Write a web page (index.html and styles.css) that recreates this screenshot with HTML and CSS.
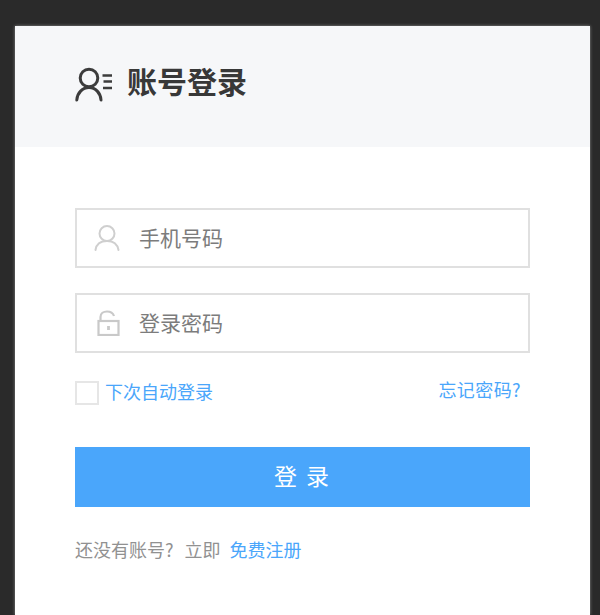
FILE: index.html
```html
<!DOCTYPE html>
<html lang="zh-CN">
<head>
    <meta charset="UTF-8">
    <meta name="viewport" content="width=device-width, initial-scale=1.0">
    <title>账号登录</title>
    <link rel="stylesheet" href="styles.css">
</head>
<body>

    <div class="card">
        <div class="card-head">
            <svg class="head-icon" width="38" height="36" viewBox="0 0 38 36" fill="none" stroke="#3c3c3c" stroke-width="3" stroke-linecap="round">
                <circle cx="14" cy="11" r="8.800"/>
                <path d="M1.800 33c.4-7 5.700-12.500 12.200-12.500S25.600 26 26 33"/>
                <path d="M27.500 8.500H37M28.500 14.500H37M28 21H37" stroke-linecap="butt" stroke-width="2.300"/>
            </svg>
            <h2>账号登录</h2>
        </div>

        <form class="login-form">
            <div class="field">
                <svg class="field-icon" width="26" height="26" viewBox="0 0 26 26" fill="none" stroke="#cfcfcf" stroke-width="2" stroke-linecap="round">
                    <circle cx="13" cy="8.500" r="7.500"/>
                    <path d="M1.500 25c.8-5.500 5-9 11.500-9s10.500 3.500 11.500 9"/>
                </svg>
                <input type="text" placeholder="手机号码">
            </div>

            <div class="field">
                <svg class="field-icon" width="26" height="26" viewBox="0 0 26 26" fill="none" stroke="#c9c9c9" stroke-width="2.200">
                    <rect x="4.500" y="11" width="20" height="14"/>
                    <path d="M6.500 11V7C6.500 3.500 9.500 1.500 13 1.500s6 1.500 7 4.500"/>
                    <path d="M14.500 16v4" stroke-width="2.800"/>
                </svg>
                <input type="text" placeholder="登录密码">
            </div>

            <div class="options">
                <label class="remember"><span class="check"></span><span class="remember-text">下次自动登录</span></label>
                <a class="forgot" href="#">忘记密码?</a>
            </div>

            <button type="button" class="submit">登 录</button>

            <p class="signup">还没有账号? 立即<a href="#">免费注册</a></p>
        </form>
    </div>

</body>
</html>
```

FILE: styles.css
```css
html, body {
    height: 100%;
}

body {
    box-sizing: border-box;
    margin: 0;
    padding: 26px 10px 0 15px;
    overflow: hidden;
    font-family: "Noto Sans CJK SC", "Liberation Sans", sans-serif;
    background-color: #2a2a2a;
}

.card {
    height: 100%;
    background-color: white;
    box-shadow: 0 0 3px rgba(255, 255, 255, 0.45);
}

.card-head {
    display: flex;
    align-items: center;
    height: 121px;
    padding-left: 60px;
    padding-bottom: 8px;
    box-sizing: border-box;
    background-color: #f6f7f9;
}

.head-icon {
    margin-right: 14px;
    margin-top: 5px;
}

h2 {
    margin: 0 0 6px;
    font-size: 30px;
    line-height: 40px;
    font-weight: 700;
    color: #383838;
}

.login-form {
    padding: 61px 60px 0;
}

.field {
    display: flex;
    align-items: center;
    box-sizing: border-box;
    width: 455px;
    height: 60px;
    margin-bottom: 25px;
    padding-left: 17px;
    border: 2px solid #e0e0e0;
}

.field-icon {
    flex: none;
    margin-right: 19px;
}

input {
    flex: 1;
    min-width: 0;
    padding: 0 0 3px;
    border: none;
    outline: none;
    font-family: inherit;
    font-size: 21px;
    background: none;
}

input::placeholder {
    color: #7c7c7c;
    opacity: 1;
}

.options {
    display: flex;
    justify-content: space-between;
    align-items: center;
    width: 446px;
    height: 24px;
    margin-top: 28px;
    font-size: 18px;
    color: #4aa6fb;
}

.remember {
    display: flex;
    align-items: center;
}

.check {
    box-sizing: border-box;
    width: 24px;
    height: 24px;
    margin-right: 6px;
    border: 2px solid #e6e6e6;
}

.remember-text {
    margin-bottom: 5px;
}

.forgot {
    color: #4aa6fb;
    text-decoration: none;
    letter-spacing: 0.4px;
    margin-bottom: 8px;
}

.submit {
    display: block;
    width: 455px;
    height: 60px;
    margin-top: 42px;
    padding: 0 0 5px;
    border: none;
    font-family: inherit;
    font-size: 23px;
    letter-spacing: 2px;
    color: white;
    background-color: #4aa6fb;
}

.signup {
    margin: 30px 0 0;
    font-size: 18px;
    line-height: 24px;
    word-spacing: 7px;
    color: #919191;
}

.signup a {
    margin-left: 9px;
    color: #4aa6fb;
    text-decoration: none;
}
```
